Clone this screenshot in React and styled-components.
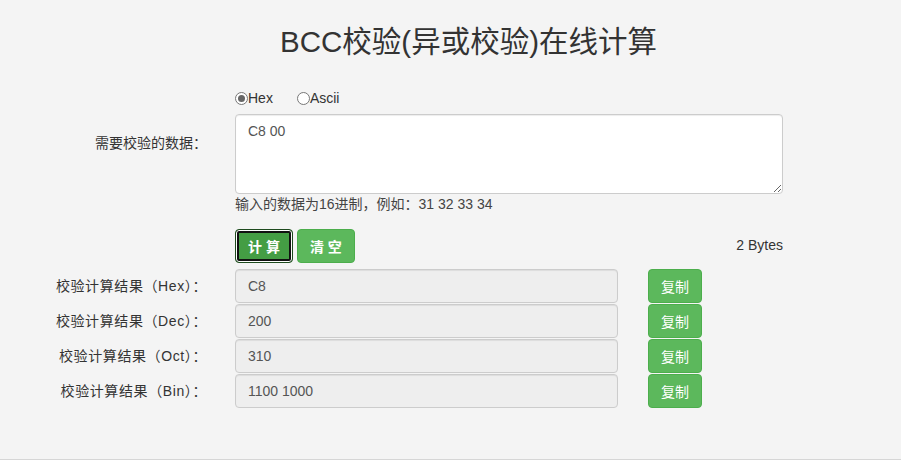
import React, { useState } from 'react';
import styled, { createGlobalStyle } from 'styled-components';

const GlobalStyle = createGlobalStyle`
  html, body {
    margin: 0;
    padding: 0;
    background: #fff;
  }
  body {
    font-family: "Liberation Sans", "Noto Sans CJK SC", sans-serif;
    font-size: 14px;
    color: #333;
  }
`;

const Page = styled.div`
  background: #f4f4f4;
  min-height: 460px;
  border-bottom: 1px solid #d6d6d6;
  padding-top: 26px;
  box-sizing: border-box;
`;

const Title = styled.h1`
  margin: 0;
  padding-left: 36px;
  text-align: center;
  font-size: 29.5px;
  line-height: 31px;
  font-weight: 400;
  color: #333;
`;

const Form = styled.div`
  margin-top: 31px;
  display: flex;
  flex-direction: column;
`;

const Row = styled.div`
  display: grid;
  grid-template-columns: 207px 548px;
  column-gap: 28px;
  align-items: ${(p) => (p.$top ? 'start' : 'center')};
  margin-top: ${(p) => p.$gap || 0}px;
`;

const Label = styled.div`
  text-align: right;
  line-height: 20px;
  padding-top: ${(p) => p.$pad || 0}px;
  white-space: nowrap;
  letter-spacing: ${(p) => (p.$wide ? '0.6px' : '0')};
`;

const Radios = styled.div`
  display: flex;
  align-items: center;
  gap: 24px;
  line-height: 20px;
`;

const RadioLabel = styled.label`
  display: flex;
  align-items: center;
`;

const Radio = styled.input`
  appearance: none;
  margin: 0;
  width: 13px;
  height: 13px;
  border-radius: 50%;
  border: 1px solid #777;
  background: #fff;
  box-sizing: border-box;
  position: relative;
  &:checked::after {
    content: '';
    position: absolute;
    left: 2px;
    top: 2px;
    width: 7px;
    height: 7px;
    border-radius: 50%;
    background: #666;
  }
`;

const TextArea = styled.textarea`
  display: block;
  width: 548px;
  height: 80px;
  box-sizing: border-box;
  padding: 8px 12px;
  border: 1px solid #ccc;
  border-radius: 4px;
  background: #fff;
  font-family: inherit;
  font-size: 14px;
  color: #555;
  resize: vertical;
  box-shadow: inset 0 1px 1px rgba(0, 0, 0, 0.075);
`;

const Help = styled.div`
  line-height: 20px;
  color: #444;
`;

const Actions = styled.div`
  display: flex;
  align-items: center;
  gap: 4px;
`;

const Bytes = styled.span`
  margin-left: auto;
  margin-top: -3px;
`;

const Button = styled.button`
  height: 34px;
  padding: 0 12px;
  border: 1px solid ${(p) => (p.$active ? '#1e4a1e' : '#4cae4c')};
  border-radius: 4px;
  background: ${(p) => (p.$active ? '#449d44' : '#5cb85c')};
  color: #fff;
  font-family: inherit;
  font-size: 14px;
  font-weight: ${(p) => (p.$bold ? 700 : 400)};
  box-shadow: ${(p) =>
    p.$active ? 'inset 0 0 0 1px #fff, inset 0 0 0 3px #111' : 'none'};
  cursor: pointer;
`;

const ResultField = styled.div`
  display: flex;
  align-items: center;
  gap: 30px;
`;

const Output = styled.input`
  width: 383px;
  height: 34px;
  box-sizing: border-box;
  padding: 6px 12px;
  border: 1px solid #ccc;
  border-radius: 4px;
  background: #eee;
  font-family: inherit;
  font-size: 14px;
  color: #555;
  box-shadow: inset 0 1px 1px rgba(0, 0, 0, 0.075);
`;

const results = [
  { key: 'Hex', value: 'C8' },
  { key: 'Dec', value: '200' },
  { key: 'Oct', value: '310' },
  { key: 'Bin', value: '1100 1000' },
];

export default function App() {
  const [mode, setMode] = useState('hex');
  return (
    <>
      <GlobalStyle />
      <Page>
        <Title>BCC校验(异或校验)在线计算</Title>
        <Form>
          <Row>
            <span />
            <Radios>
              <RadioLabel>
                <Radio type="radio" name="mode" checked={mode === 'hex'} onChange={() => setMode('hex')} />
                Hex
              </RadioLabel>
              <RadioLabel>
                <Radio type="radio" name="mode" checked={mode === 'ascii'} onChange={() => setMode('ascii')} />
                Ascii
              </RadioLabel>
            </Radios>
          </Row>
          <Row $top $gap={6}>
            <Label $pad={19}>需要校验的数据：</Label>
            <div>
              <TextArea defaultValue="C8 00" />
              <Help>输入的数据为16进制，例如：31 32 33 34</Help>
            </div>
          </Row>
          <Row $gap={15}>
            <span />
            <Actions>
              <Button $active $bold>计 算</Button>
              <Button $bold>清 空</Button>
              <Bytes>2 Bytes</Bytes>
            </Actions>
          </Row>
          {results.map((r, i) => (
            <Row key={r.key} $gap={i === 0 ? 6 : 1}>
              <Label $wide>校验计算结果（{r.key}）：</Label>
              <ResultField>
                <Output readOnly value={r.value} />
                <Button>复制</Button>
              </ResultField>
            </Row>
          ))}
        </Form>
      </Page>
    </>
  );
}
